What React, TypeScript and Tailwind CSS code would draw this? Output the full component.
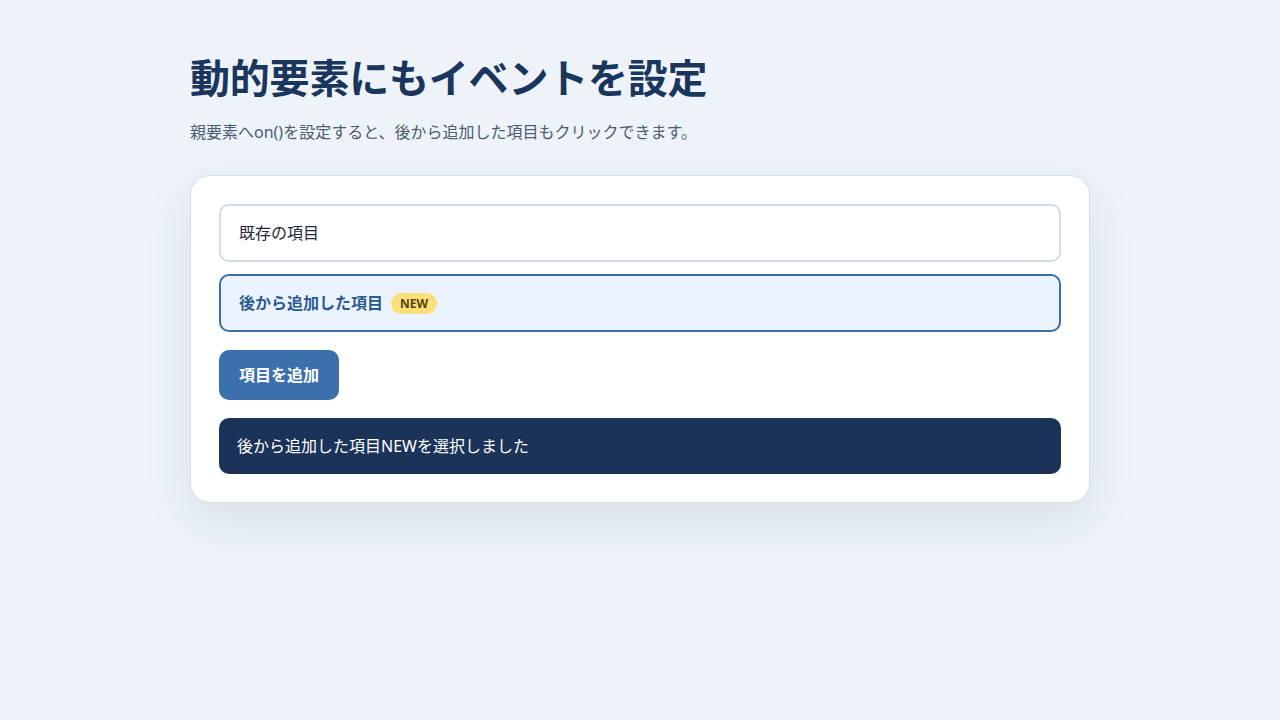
import { useState } from 'react'

type Item = { id: number; label: string; isNew: boolean }

export default function App() {
  const [items, setItems] = useState<Item[]>([
    { id: 1, label: '既存の項目', isNew: false },
    { id: 2, label: '後から追加した項目', isNew: true },
  ])
  const [selectedId, setSelectedId] = useState<number | null>(2)

  const selected = items.find((i) => i.id === selectedId)

  const addItem = () => {
    setItems((prev) => [
      ...prev,
      { id: prev.length + 1, label: '後から追加した項目', isNew: true },
    ])
  }

  return (
    <div
      className="min-h-screen w-full bg-[#eef3f9] text-[#1e293b]"
      style={{ fontFamily: '"Noto Sans", "Noto Sans CJK JP", sans-serif' }}
    >
      <div className="mx-auto w-[900px] pt-[50px]">
        <h1 className="text-[40px] leading-[56px] font-bold tracking-[-0.2px] text-[#1b365d]">
          動的要素にもイベントを設定
        </h1>
        <p className="mt-[13px] text-[16px] leading-[26px] text-[#4b5b70]">
          親要素へon()を設定すると、後から追加した項目もクリックできます。
        </p>

        <div className="mt-[30px] rounded-[20px] border border-[#d5dde7] bg-white p-[28px] shadow-[0_18px_48px_rgba(27,54,93,0.10)]">
          <ul className="flex flex-col gap-[12px]">
            {items.map((item) => {
              const active = item.id === selectedId
              return (
                <li
                  key={item.id}
                  onClick={() => setSelectedId(item.id)}
                  className={
                    active
                      ? 'flex h-[58px] cursor-pointer items-center gap-[8px] rounded-[10px] border-2 border-[#3b6ea8] bg-[#ebf4fe] px-[18px] text-[16px] font-bold text-[#2b5a90]'
                      : 'flex h-[58px] cursor-pointer items-center gap-[8px] rounded-[10px] border-2 border-[#d3dce6] bg-white px-[18px] text-[16px] text-[#1e293b]'
                  }
                >
                  <span>{item.label}</span>
                  {item.isNew && (
                    <span className="rounded-full bg-[#fbe07c] px-[9px] text-[12px] leading-[21px] font-bold text-[#5b4408]">
                      NEW
                    </span>
                  )}
                </li>
              )
            })}
          </ul>

          <button
            onClick={addItem}
            className="mt-[18px] h-[50px] rounded-[10px] bg-[#3c70ad] px-[20px] text-[16px] font-bold text-white"
          >
            項目を追加
          </button>

          <div className="mt-[18px] flex h-[56px] items-center rounded-[10px] bg-[#1b3358] px-[18px] text-[16px] text-white">
            {selected ? `${selected.label}${selected.isNew ? 'NEW' : ''}を選択しました` : '項目を選択してください'}
          </div>
        </div>
      </div>
    </div>
  )
}
